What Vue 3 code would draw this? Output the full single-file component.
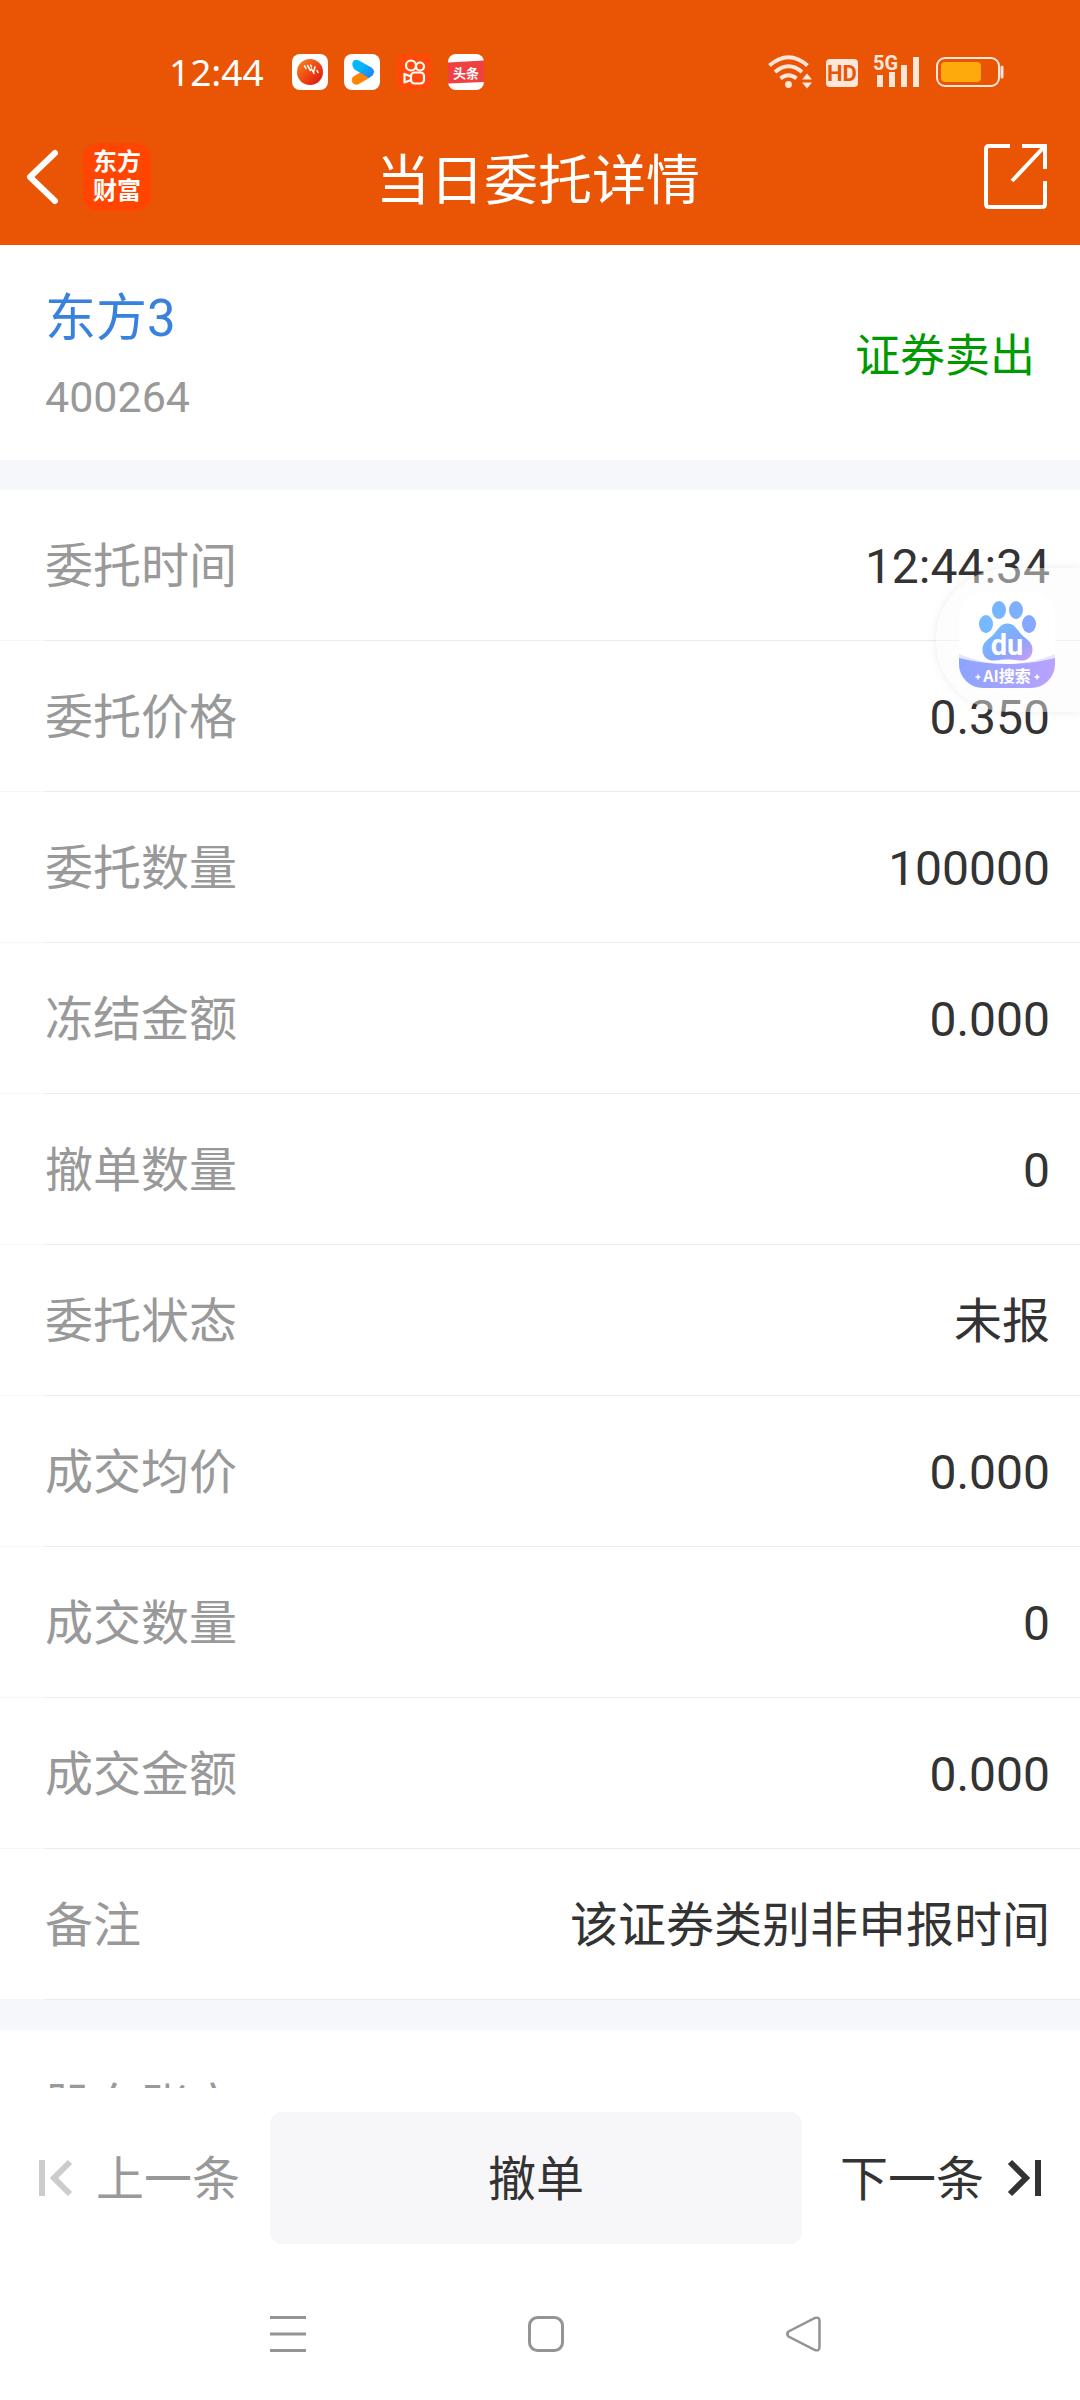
<script setup>
import { ref } from 'vue'

const stock = { name: '东方3', code: '400264', side: '证券卖出' }

const rows = ref([
  { label: '委托时间', value: '12:44:34' },
  { label: '委托价格', value: '0.350' },
  { label: '委托数量', value: '100000' },
  { label: '冻结金额', value: '0.000' },
  { label: '撤单数量', value: '0' },
  { label: '委托状态', value: '未报' },
  { label: '成交均价', value: '0.000' },
  { label: '成交数量', value: '0' },
  { label: '成交金额', value: '0.000' },
  { label: '备注', value: '该证券类别非申报时间' }
])
</script>

<template>
  <div class="page">
    <header class="top">
      <div class="status-bar">
        <div class="status-left">
          <span class="clock">12:44</span>
          <svg class="app-icon" viewBox="0 0 36 36">
            <defs>
              <linearGradient id="ball" x1="0" y1="0" x2="1" y2="1">
                <stop offset="0" stop-color="#f58a1f" />
                <stop offset="0.5" stop-color="#ee4a12" />
                <stop offset="1" stop-color="#d80f0f" />
              </linearGradient>
            </defs>
            <rect width="36" height="36" rx="8" fill="#fff" />
            <circle cx="18" cy="18" r="13" fill="url(#ball)" />
            <path d="M12.500 12l1.500 2.500M15.500 11.500l3 5M18.500 11l1 2M19.500 15l2.500 4.500M23 13l-1.500 5M25 16.500l1 2" stroke="#fff" stroke-width="1.500" stroke-linecap="round" fill="none" />
          </svg>
          <svg class="app-icon" viewBox="0 0 36 36">
            <defs>
              <linearGradient id="play" x1="0" y1="0" x2="1" y2="1">
                <stop offset="0.4" stop-color="#06b7fb" />
                <stop offset="1" stop-color="#2878f0" />
              </linearGradient>
            </defs>
            <rect width="36" height="36" rx="8" fill="#fff" />
            <path d="M12.500 26L22 20.500" stroke="#ff8408" stroke-width="9.500" stroke-linecap="round" />
            <path d="M10 6.200Q12 5 15 6.500L27.500 13.500Q32 17 28.500 21.500L25 24L10.500 15.500Q6 10 10 6.200Z" fill="url(#play)" />
          </svg>
          <svg class="app-icon" viewBox="0 0 36 36">
            <rect width="36" height="36" rx="8" fill="#ff4a08" />
            <g fill="none" stroke="#fff" stroke-width="2.200" stroke-linejoin="round">
              <circle cx="15" cy="11.500" r="5" />
              <circle cx="24" cy="12.500" r="4" />
              <rect x="15" y="18.500" width="13" height="11" rx="3.500" />
              <path d="M15 22.500L8.500 20V28.500L15 26" />
            </g>
          </svg>
          <svg class="app-icon" viewBox="0 0 36 36">
            <rect width="36" height="36" rx="8" fill="#fff" />
            <path d="M0 8.500L36 6.500V28L0 29.500Z" fill="#f04142" />
            <text class="cjk-bold" x="18" y="23.500" font-size="13" text-anchor="middle" fill="#fff">头条</text>
          </svg>
        </div>
        <div class="status-right">
          <svg width="46" height="36" viewBox="0 0 46 36">
            <g fill="none" stroke="#ffe6d9" stroke-width="4">
              <path d="M1.500 11.500Q20.500-5 39.500 11.500" />
              <path d="M7 18Q20.500 6.500 34 18" />
              <path d="M12.500 24.500Q20.500 18 28.500 24.500" />
            </g>
            <circle cx="20.500" cy="30.500" r="3.400" fill="#ffe6d9" />
            <path d="M34 25.500L39 19.500L44 25.500ZM34 28.500L39 34.500L44 28.500Z" fill="#ffe6d9" />
          </svg>
          <svg width="32" height="36" viewBox="0 0 32 36">
            <rect y="5" width="32" height="28" rx="4" fill="#ffe6d9" />
            <text class="badge-text" x="16" y="27" font-size="22" text-anchor="middle" fill="#e95504">HD</text>
          </svg>
          <svg class="signal" width="48" height="36" viewBox="0 0 48 36">
            <text class="badge-text" x="0" y="16" font-size="20" fill="#ffe6d9">5G</text>
            <path d="M7 33V21M19 33V18M31 33V11M43 33V3" stroke="#ffe6d9" stroke-width="6" />
          </svg>
          <svg class="battery" width="68" height="36" viewBox="0 0 68 36">
            <rect x="1" y="4" width="62" height="28" rx="8" fill="none" stroke="#ffe6d9" stroke-width="2" />
            <rect x="5" y="8" width="40" height="20" rx="4" fill="#ffaa0c" />
            <path d="M66 13V23" stroke="#ffe6d9" stroke-width="3" stroke-linecap="round" />
          </svg>
        </div>
      </div>

      <div class="title-bar">
        <div class="title-left">
          <button class="icon-btn" aria-label="返回">
            <svg width="34" height="56" viewBox="0 0 34 56">
              <path d="M29 4L4 28L29 52" fill="none" stroke="#fff" stroke-width="6" stroke-linecap="round" stroke-linejoin="round" />
            </svg>
          </button>
          <span class="brand">东方<br>财富</span>
        </div>
        <h1>当日委托详情</h1>
        <button class="icon-btn share" aria-label="分享">
          <svg width="64" height="66" viewBox="0 0 64 66">
            <path d="M26 2H5Q2 2 2 5V60Q2 63 5 63H58Q61 63 61 60V37M38 2H61V25M60 3L28 37" fill="none" stroke="#fff" stroke-width="4" />
          </svg>
        </button>
      </div>
    </header>

    <main class="content">
      <section class="stock">
        <div>
          <a class="stock-name" href="#">{{ stock.name }}</a>
          <div class="stock-code">{{ stock.code }}</div>
        </div>
        <span class="side">{{ stock.side }}</span>
      </section>

      <dl class="details">
        <div v-for="row in rows" :key="row.label" class="row">
          <dt>{{ row.label }}</dt>
          <dd>{{ row.value }}</dd>
        </div>
      </dl>

      <dl class="details">
        <div class="row">
          <dt>股东账户</dt>
        </div>
      </dl>

      <!-- floating search shortcut -->
      <button class="float-search" aria-label="AI搜索">
        <svg width="96" height="96" viewBox="0 0 96 96">
          <defs>
            <linearGradient id="paw" x1="0" y1="0" x2="1" y2="1">
              <stop offset="0" stop-color="#6fc3ff" />
              <stop offset="0.6" stop-color="#86a6fb" />
              <stop offset="1" stop-color="#cf9df5" />
            </linearGradient>
            <linearGradient id="band" x1="0" y1="0" x2="1" y2="0">
              <stop offset="0" stop-color="#8ca4ff" />
              <stop offset="1" stop-color="#b9a2ff" />
            </linearGradient>
            <clipPath id="tile"><rect width="96" height="96" rx="24" /></clipPath>
          </defs>
          <g clip-path="url(#tile)">
            <rect width="96" height="96" fill="#fff" />
            <path d="M0 62Q48 82 96 62V80H0Z" fill="#e6e7ff" />
            <path d="M0 66Q48 78 96 66V96H0Z" fill="url(#band)" />
          </g>
          <g fill="#7fb0fd">
            <ellipse cx="40" cy="18" rx="7" ry="9" fill="#76b5ff" />
            <ellipse cx="57" cy="18" rx="7" ry="9" />
            <ellipse cx="27" cy="32" rx="7" ry="9" fill="#76b9ff" />
            <ellipse cx="70" cy="32" rx="7" ry="9" fill="#86a9ff" />
          </g>
          <path d="M48.500 31.500C56 31.500 58 38 63 43C68 48 73.500 50 73.500 57.500C73.500 66 67 69 61 68.500C56 68 53 67.500 48.500 67.500C44 67.500 41 68 36 68.500C30 69 23.500 66 23.500 57.500C23.500 50 29 48 34 43C39 38 41 31.500 48.500 31.500Z" fill="url(#paw)" />
          <text class="badge-text" x="48" y="63" font-size="29" text-anchor="middle" fill="#fff">du</text>
          <text class="cjk-bold" x="48" y="90" font-size="16" text-anchor="middle" fill="#fff">AI搜索</text>
          <path d="M16.500 85H21.500M19 82.500V87.500M75.500 85H80.500M78 82.500V87.500" stroke="#fff" stroke-width="1.500" />
        </svg>
      </button>
    </main>

    <footer>
      <div class="actions">
        <button class="step prev" disabled>
          <svg width="33" height="38" viewBox="0 0 33 38">
            <path d="M3 1V37M31 3L15 19L31 35" fill="none" stroke="#ccc" stroke-width="6" />
          </svg>
          <span class="label">上一条</span>
        </button>
        <button class="cancel"><span class="label">撤单</span></button>
        <button class="step next">
          <span class="label">下一条</span>
          <svg width="33" height="38" viewBox="0 0 33 38">
            <path d="M30 1V37M2 3L18 19L2 35" fill="none" stroke="#333" stroke-width="6" />
          </svg>
        </button>
      </div>
      <nav class="system-nav">
        <button class="icon-btn" aria-label="菜单">
          <svg width="36" height="36" viewBox="0 0 36 36">
            <path d="M0 1.500H36M0 18H36M0 34.500H36" stroke="#949494" stroke-width="3" />
          </svg>
        </button>
        <button class="icon-btn" aria-label="主页">
          <svg width="36" height="36" viewBox="0 0 36 36">
            <rect x="1.500" y="1.500" width="33" height="33" rx="8" fill="none" stroke="#949494" stroke-width="3" />
          </svg>
        </button>
        <button class="icon-btn" aria-label="后退">
          <svg width="36" height="36" viewBox="0 0 36 36">
            <path d="M2.500 15.500L29 2Q33.500 0.500 33.500 5V31Q33.500 35.500 29 34L2.500 20.500Q0 18 2.500 15.500Z" fill="none" stroke="#949494" stroke-width="2.500" />
          </svg>
        </button>
      </nav>
    </footer>
  </div>
</template>

<style>
body {
  margin: 0;
  background: #fff;
}
</style>

<style scoped>
.page {
  display: flex;
  flex-direction: column;
  height: 100vh;
  background: #fff;
  color: #333;
  font-family: Roboto, "Noto Sans CJK SC", sans-serif;
  font-size: 48px;
  line-height: 60px;
}

button {
  border: 0;
  padding: 0;
  background: none;
  color: inherit;
  font: inherit;
}

svg {
  display: block;
  overflow: visible;
}

.icon-btn {
  display: block;
}

.top {
  flex: none;
  background: #e95504;
  color: #fff;
}

.status-bar {
  display: flex;
  justify-content: space-between;
  padding: 36px 76px 0 169px;
}

.status-left,
.status-right {
  display: flex;
  align-items: center;
  height: 72px;
}

.status-left {
  gap: 16px;
}

.clock {
  margin-right: 12px;
  font-family: "Noto Sans", sans-serif;
  font-size: 37px;
  line-height: 72px;
}

.app-icon {
  width: 36px;
  height: 36px;
}

.status-right {
  gap: 12px;
}

.battery,
.signal {
  margin-left: 3px;
}

.badge-text {
  font-family: Roboto, sans-serif;
  font-weight: 700;
}

.cjk-bold {
  font-family: "Noto Sans CJK SC", sans-serif;
  font-weight: 700;
}

.title-bar {
  display: grid;
  grid-template-columns: 1fr auto 1fr;
  align-items: center;
  height: 137px;
  padding: 0 32px 0 26px;
}

.title-left {
  display: flex;
  align-items: center;
  gap: 23px;
}

.brand {
  width: 68px;
  padding: 5px 0;
  border-radius: 15px;
  background: #ff4500;
  font-size: 24px;
  font-weight: 700;
  line-height: 29px;
  text-align: center;
}

h1 {
  margin: 0;
  padding: 10px 0 0 2px;
  font-size: 54px;
  font-weight: 400;
  line-height: 80px;
}

.share {
  justify-self: end;
}

.content {
  position: relative;
  flex: 1;
  min-height: 0;
  overflow: hidden;
}

.stock {
  display: flex;
  align-items: center;
  justify-content: space-between;
  padding: 32px 45px 27px;
}

.stock-name {
  display: block;
  color: #3881dd;
  font-size: 51px;
  line-height: 84px;
  text-decoration: none;
}

.stock-code {
  color: #999;
  font-size: 43px;
  line-height: 72px;
}

.side {
  padding-top: 4px;
  color: #090;
  font-size: 45px;
}

.details {
  margin: 0;
  border-top: 30px solid #f6f7fa;
}

/* divider is paler under the left inset */
.row {
  display: flex;
  align-items: center;
  justify-content: space-between;
  height: 151px;
  padding: 3px 30px 0 45px;
  box-sizing: border-box;
  background: linear-gradient(to right, #f7f7f7 45px, #ebebeb 45px) bottom / 100% 1px no-repeat;
}

dt {
  color: #999;
}

dd {
  margin: 0;
}

.float-search {
  position: absolute;
  top: 323px;
  right: 0;
  width: 144px;
  height: 144px;
  padding-left: 23px;
  border-radius: 72px 0 0 72px;
  background: rgba(250, 250, 250, 0.45);
  box-shadow: 0 0 10px rgba(0, 0, 0, 0.08);
}

.actions {
  display: flex;
  align-items: center;
  padding: 24px 39px;
}

.step {
  display: flex;
  align-items: center;
  gap: 24px;
  white-space: nowrap;
}

.label {
  display: block;
  padding-top: 4px;
}

.prev {
  color: #999;
}

.cancel {
  flex: 1;
  height: 132px;
  margin: 0 38px 0 30px;
  border-radius: 12px;
  background: #f7f7fa;
}

.system-nav {
  display: flex;
  align-items: center;
  justify-content: center;
  gap: 222px;
  height: 132px;
  padding-left: 12px;
}
</style>
